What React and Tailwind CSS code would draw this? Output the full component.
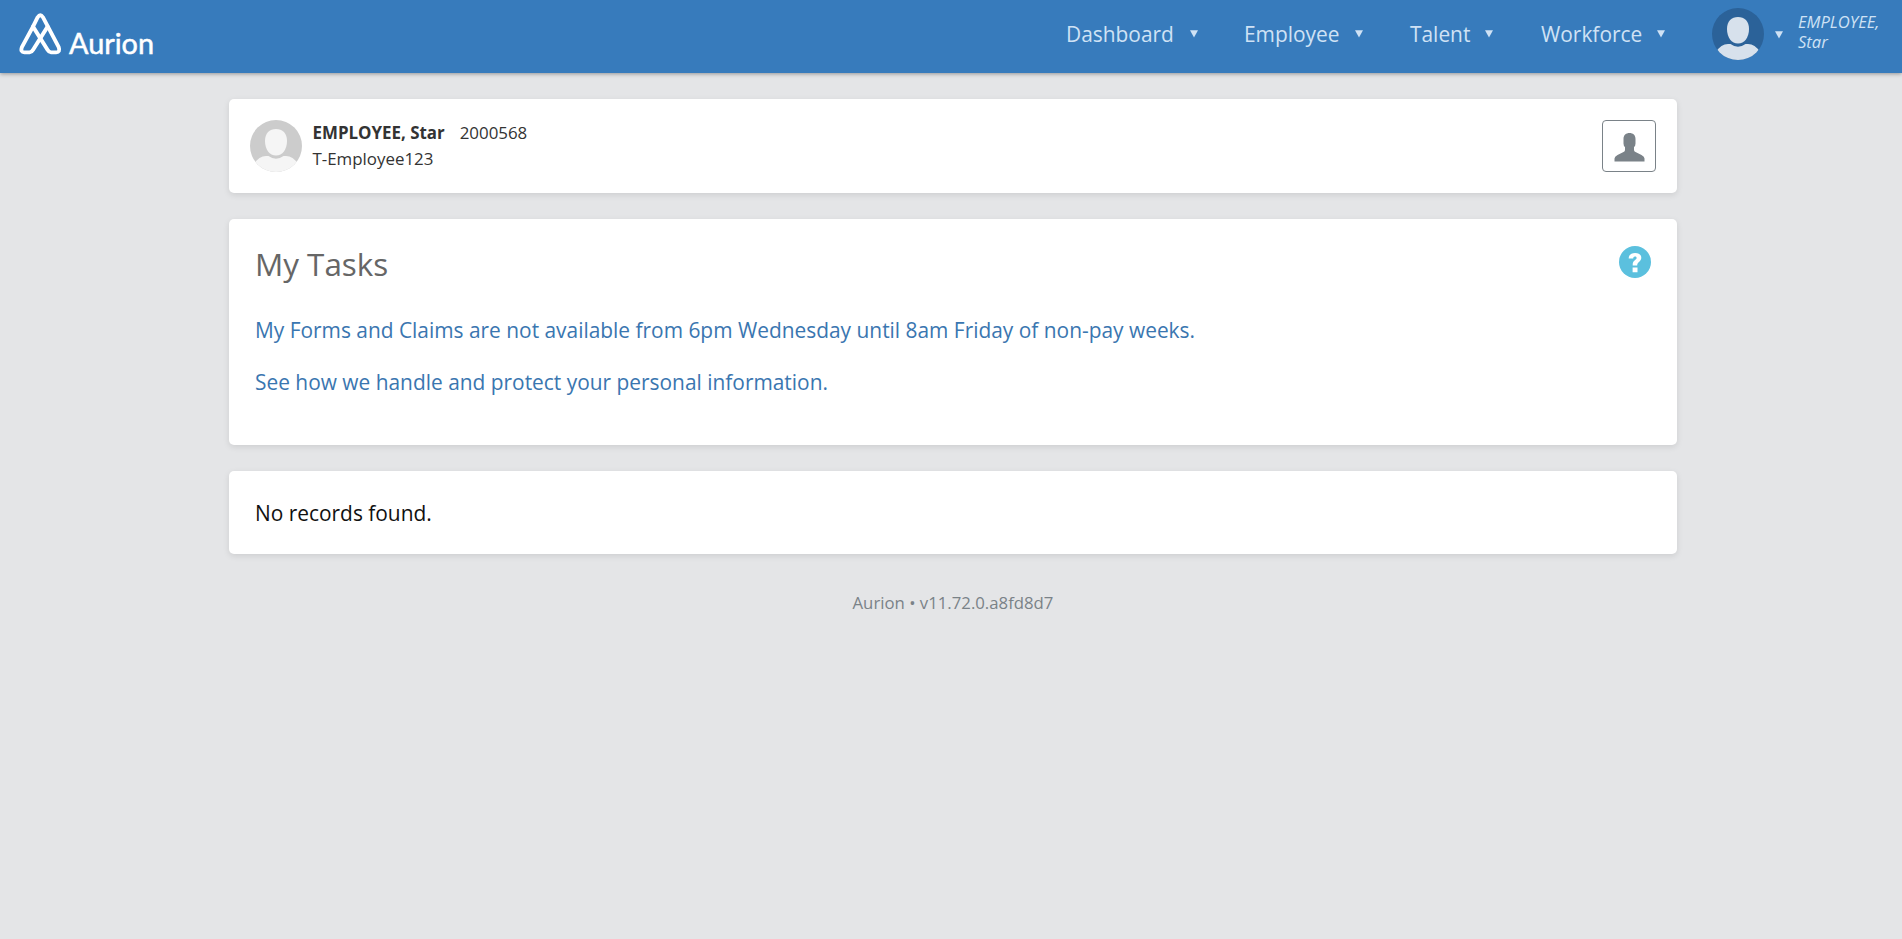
import React from "react";

function Logo() {
  return (
    <a className="flex h-[73px] items-start pl-[19px]" aria-label="Aurion">
      <svg className="mt-[12px]" width="44" height="44" viewBox="0 0 43 44" fill="none" stroke="#fff" strokeWidth="3.9" strokeLinecap="round" strokeLinejoin="round">
        <path d="M13.5 14.6 L18.2 5.2 Q20.8 1.2 23.4 5.2 L39.2 35.2 Q41 40.2 36.6 40.4 H31.6 Q29.4 40.2 28 37.8 L13.5 14.6" />
        <path d="M28.1 14.6 L13.6 37.8 Q12.2 40.2 10 40.4 H5 Q0.6 40.2 2.4 35.2 L13.5 14.6" />
      </svg>
      <svg className="ml-[4px]" width="90" height="72">
        <text x="2" y="54" fill="#fff" stroke="#fff" strokeWidth="0.5" fontFamily="Lato, sans-serif" fontSize="29" textLength="85" lengthAdjust="spacingAndGlyphs">Aurion</text>
      </svg>
    </a>
  );
}

function Caret() {
  return (
    <svg width="8" height="8" viewBox="0 0 8 8" fill="#cfe2f5">
      <path d="M0 0.3h8L4 7.5z" />
    </svg>
  );
}

function Avatar({ back, front, id }) {
  return (
    <svg className="shrink-0" width="52" height="52" viewBox="0 0 52 52">
      <clipPath id={id}>
        <circle cx="26" cy="26" r="26" />
      </clipPath>
      <circle cx="26" cy="26" r="26" fill={back} />
      <g clipPath={`url(#${id})`} fill={front}>
        <path d="M26 9C32.5 9 37 13 37 21C37 29.500 32.500 35.500 26 35.500C19.500 35.500 15 29.500 15 21C15 13 19.500 9 26 9Z" />
        <path d="M4 44Q9 36 16 36H18.500Q26 41.500 33.500 36H36Q43 36 48 44V52H4Z" />
      </g>
    </svg>
  );
}

const menu = [
  ["Dashboard", "w-[178px] gap-[16px]"],
  ["Employee", "w-[166px] gap-[15px]"],
  ["Talent", "w-[131px] gap-[15px]"],
  ["Workforce", "w-[171px] gap-[15px]"],
];

function Header() {
  return (
    <header className="relative flex h-[73px] justify-between bg-[#377bbc] shadow-[0_1px_4px_rgba(0,0,0,0.35)]">
      <Logo />
      <nav className="flex h-[68px] items-center text-[#cfe2f5]">
        {menu.map(([label, layout]) => (
          <div key={label} className={"flex items-center pt-px " + layout}>
            <span className="text-[20.9px]">{label}</span>
            <Caret />
          </div>
        ))}
        <Avatar back="#2b6299" front="#d7e1ec" id="header-avatar" />
        <div className="ml-[11px] pt-px">
          <Caret />
        </div>
        <div className="ml-[15px] w-[104px] pb-[4px] text-[16.6px] leading-[20px] italic">
          EMPLOYEE,
          <br />
          Star
        </div>
      </nav>
    </header>
  );
}

function Card({ className, children }) {
  return (
    <section className={"rounded-[5px] bg-white shadow-[0_2px_6px_rgba(0,0,0,0.1)] " + className}>
      {children}
    </section>
  );
}

export default function App() {
  return (
    <div className="min-h-[939px] bg-[#e4e5e7] font-['Open_Sans',sans-serif]">
      <Header />
      <main className="ml-[229px] flex w-[1448px] flex-col gap-[26px] pt-[26px]">
        <Card className="flex h-[94px] items-start px-[21px] pt-[21px]">
          <Avatar back="#cccccc" front="#f5f5f5" id="card-avatar" />
          <div className="ml-[10.5px] text-[16.9px] leading-[26px] text-[#333]">
            <div className="flex gap-[15px]">
              <span className="font-bold">EMPLOYEE, Star</span>
              <span>2000568</span>
            </div>
            <div>T-Employee123</div>
          </div>
          <button className="ml-auto flex h-[52px] w-[54px] items-center justify-center rounded-[4px] border border-[#7a8288]">
            <svg className="mt-[3px]" width="31" height="29" viewBox="0 0 31 29" fill="#7a8288">
              <path d="M9.500 6C9.500 2 12 0 15.500 0S21.500 2 21.500 6V10.500Q21.500 13 20 14V17Q20 18.300 21.500 19L27.500 22Q30.500 23.500 30.500 25.500V28.500H0.500V25.500Q0.500 23.500 3.500 22L9.500 19Q11 18.300 11 17V14Q9.500 13 9.500 10.500Z" />
            </svg>
          </button>
        </Card>
        <Card className="h-[226px] px-[26px] pt-[23px]">
          <div className="flex items-start justify-between">
            <h1 className="text-[31.4px] leading-[44px] text-[#666]">My Tasks</h1>
            <svg className="mt-[4px]" width="32" height="32" viewBox="0 0 32 32">
              <circle cx="16" cy="16" r="16" fill="#5bc0de" />
              <path d="M13.700 19.500V18.500C13.700 14 17.600 14 17.600 11.900C17.600 10.800 16.900 10.500 16 10.500C14.800 10.500 14.300 11.200 14.200 12.600H9.700C9.700 8.800 12.300 7 16.100 7C19.800 7 22.300 8.700 22.300 11.800C22.300 15.800 18.200 15.700 18.200 19.500ZM13.600 21.500H18.500V26.300H13.600Z" fill="#fff" />
            </svg>
          </div>
          <p className="mt-[28px] text-[20.9px] leading-[32px] text-[#3a76b0]">
            My Forms and Claims are not available from 6pm Wednesday until 8am Friday of non-pay weeks.
          </p>
          <p className="mt-[20px] text-[20.9px] leading-[32px] text-[#3a76b0]">
            See how we handle and protect your personal information.
          </p>
        </Card>
        <Card className="flex h-[83px] items-center px-[26px] pt-[3px] text-[20.9px] text-[#111]">
          No records found.
        </Card>
        <footer className="pt-[11px] text-center text-[16.750px] leading-[24px] text-[#7a8288]">
          Aurion • v11.72.0.a8fd8d7
        </footer>
      </main>
    </div>
  );
}
